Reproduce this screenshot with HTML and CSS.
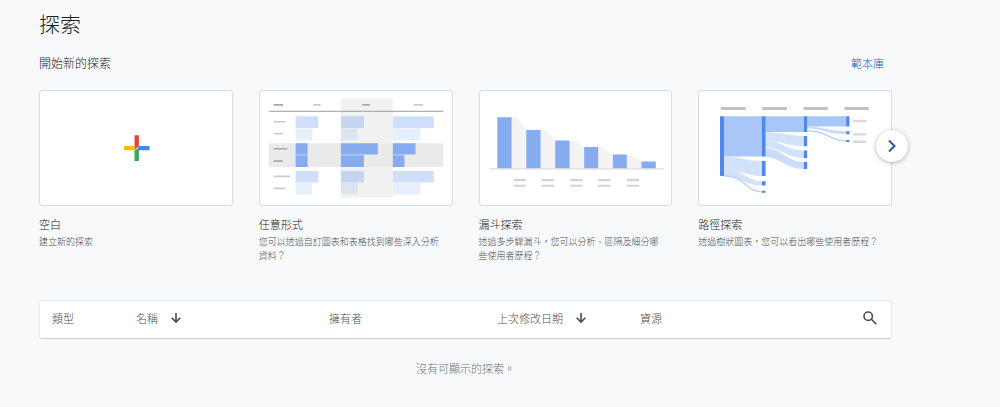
FILE: index.html
```html
<!DOCTYPE html>
<html lang="zh-Hant">
<head>
    <meta charset="utf-8">
    <title>探索</title>
    <link rel="stylesheet" href="styles.css">
</head>
<body>
    <main class="page">
        <h1 class="page-title">探索</h1>

        <section>
            <div class="section-head">
                <h2>開始新的探索</h2>
                <a class="gallery-link" href="#">範本庫</a>
            </div>

            <div class="templates">
                <a class="template" href="#">
                    <span class="preview">
                        <svg viewBox="27 18 576 342" aria-hidden="true">
                            <path fill="#ea4335" d="M311 151h13v32l-13 13z" />
                            <path fill="#fbbc04" d="M279 183h32v13h-32z" />
                            <path fill="#34a853" d="M311 196l13-6v38h-13z" />
                            <path fill="#4285f4" d="M324 183h32v13h-38z" />
                        </svg>
                    </span>
                    <span class="template-name">空白</span>
                    <span class="template-text">建立新的探索</span>
                </a>

                <a class="template" href="#">
                    <span class="preview">
                        <svg viewBox="27 18 576 342" aria-hidden="true">
                            <path fill="#f1f1f1" d="M270 41h156v298H270z" />
                            <path fill="#ebeaea" d="M54 175h524v71H54z" />
                            <path fill="#b0b0b0" d="M54 77h524v4H54z" />
                            <path fill="#a8a8a8" d="M68 57h28v5H68zM334 57h23v5h-23zM68 189h41v5H68zM68 226h27v5H68z" />
                            <path fill="#cbcbcb" d="M187 57h22v5h-22zM490 57h27v5h-27zM68 108h36v5H68zM68 144h28v5H68zM68 272h50v5H68zM68 308h35v5H68z" />
                            <path fill="#cfdffb" d="M134 94h68v35h-68zM426 94h123v35H426zM134 258h68v35h-68zM426 258h123v35H426z" />
                            <path fill="#c5d4ef" d="M270 94h69v35h-69zM270 258h69v35h-69z" />
                            <path fill="#e6effd" d="M134 131h50v35h-50zM426 131h82v35h-82zM134 294h49v35h-49zM426 294h82v35h-82z" />
                            <path fill="#dce4f0" d="M270 131h50v35h-50zM270 294h50v35h-50z" />
                            <path fill="#86abef" d="M134 175h36v34h-36zM134 211h36v35h-36zM270 175h111v34H270zM270 211h69v35h-69zM426 175h68v34h-68zM426 211h35v35h-35z" />
                            <path fill="#a5c1f4" d="M134 209h36v2h-36zM270 209h69v2h-69zM426 209h35v2h-35z" />
                        </svg>
                    </span>
                    <span class="template-name">任意形式</span>
                    <span class="template-text">您可以透過自訂圖表和表格找到哪些深入分析資料？</span>
                </a>

                <a class="template" href="#">
                    <span class="preview">
                        <svg viewBox="27 18 576 342" aria-hidden="true">
                            <path fill="#f3f3f3" d="M122 97h14l30 38v116h-44zM209 135h14l30 32v84h-44zM296 167h14l30 19v65h-44zM382 186h14l30 23v42h-44zM468 209h14l30 21v21h-44z" />
                            <path fill="#86abef" d="M79 97h43v154H79zM166 135h43v116h-43zM253 167h43v84h-43zM340 186h42v65h-42zM426 209h42v42h-42zM512 230h43v21h-43z" />
                            <path fill="#dcdcdc" d="M56 250h523v4H56z" />
                            <path fill="#d3d3d3" d="M128 282h37v7h-37zM212 282h37v7h-37zM298 282h37v7h-37zM382 282h37v7h-37zM468 282h37v7h-37zM128 300h37v6h-37zM212 300h37v6h-37zM298 300h37v6h-37zM382 300h37v6h-37zM468 300h37v6h-37z" />
                        </svg>
                    </span>
                    <span class="template-name">漏斗探索</span>
                    <span class="template-text">透過多步驟漏斗，您可以分析、區隔及細分哪些使用者歷程？</span>
                </a>

                <div class="template-last">
                    <a class="template" href="#">
                        <span class="preview">
                            <svg viewBox="27 18 576 342" aria-hidden="true">
                                <path fill="#c1c1c1" d="M93 66h74v9H93zM217 66h74v9h-74zM341 66h73v9h-73zM464 66h73v9h-73z" />
                                <path fill="#d9d9d9" d="M489 105h41v7h-41zM489 145h41v7h-41zM489 167h41v7h-41z" />
                                <path fill="#a9c6f8" d="M102 94h114v121H102zM227 94h115v47H227zM352 94h117v31H352z" />
                                <path fill="#d2e2fb" d="M102 215c45 0 65 13 114 13v45c-34 0-50-10-79-15 30 12 50 31 79 31v13c-48 0-66-27-114-29z" />
                                <path fill="#d2e2fb" d="M227 141c45 0 65 12 115 12v31c-48 0-70-15-115-18z" />
                                <path fill="#d2e2fb" d="M227 167c45 0 65 30 115 30v22c-50 0-70-30-115-33z" />
                                <path fill="#c9dcfb" d="M227 189c45 0 65 42 115 42v21c-50 0-70-33-115-36z" />
                                <path fill="#c9dcfb" d="M352 125c45 0 68 14 117 14v9c-50 0-70-15-117-19z" />
                                <path fill="none" stroke="#b9d1fa" stroke-width="4" d="M352 138c64 0 66 30 117 30" />
                                <path fill="none" stroke="#b9d1fa" stroke-width="4" d="M102 273c64 0 66 48 114 48" />
                                <path fill="#4f87ec" d="M90 94h12v179H90zM216 94h11v121h-11zM216 228h11v45h-11zM216 289h11v13h-11zM216 318h11v6h-11zM342 94h10v47h-10zM342 153h10v31h-10zM342 197h10v22h-10zM342 231h10v21h-10zM469 94h10v31h-10zM469 139h10v9h-10zM469 165h10v6h-10z" />
                            </svg>
                        </span>
                        <span class="template-name">路徑探索</span>
                        <span class="template-text">透過樹狀圖表，您可以看出哪些使用者歷程？</span>
                    </a>
                    <button class="next" type="button" aria-label="下一頁">
                        <svg width="16" height="16" viewBox="0 0 16 16" aria-hidden="true">
                            <path fill="none" stroke="#2f559f" stroke-width="2" d="M5 2.500l5.500 5.500L5 13.500" />
                        </svg>
                    </button>
                </div>
            </div>
        </section>

        <table class="list">
            <thead>
                <tr>
                    <th class="col-type">類型</th>
                    <th class="col-name">
                        <button class="sort" type="button">名稱
                            <svg width="10" height="10" viewBox="0 0 10 10" aria-hidden="true">
                                <path d="M5 0v9M.700 4.800L5 9.100l4.300-4.300" />
                            </svg>
                        </button>
                    </th>
                    <th class="col-owner">擁有者</th>
                    <th class="col-date">
                        <button class="sort" type="button">上次修改日期
                            <svg width="10" height="10" viewBox="0 0 10 10" aria-hidden="true">
                                <path d="M5 0v9M.700 4.800L5 9.100l4.300-4.300" />
                            </svg>
                        </button>
                    </th>
                    <th>
                        <div class="last-head">
                            資源
                            <button class="search" type="button" aria-label="搜尋">
                                <svg width="14" height="14" viewBox="0 0 14 14" aria-hidden="true">
                                    <circle cx="5.200" cy="5.200" r="4.200" />
                                    <path d="M8.300 8.300l5 5" />
                                </svg>
                            </button>
                        </div>
                    </th>
                </tr>
            </thead>
        </table>
        <p class="empty">沒有可顯示的探索。</p>
    </main>
</body>
</html>
```
FILE: styles.css
```css
body {
    margin: 0;
    background-color: #f8f9fb;
    color: #202124;
    font-family: "Noto Sans CJK TC", sans-serif;
    font-weight: 300;
}
h1, h2, p { margin: 0; font-weight: 300; }
a { text-decoration: none; }
svg { display: block; }
button {
    padding: 0;
    border: 0;
    background: none;
    color: inherit;
    font: inherit;
    cursor: pointer;
}

.page { padding: 9px 108px 30px 39px; }
.page-title { font-size: 21px; line-height: 28px; }

.section-head {
    display: flex;
    align-items: center;
    justify-content: space-between;
    margin: 16px 0 17px;
    padding-right: 8px;
    line-height: 20px;
}
.section-head h2 { font-size: 12px; }
.gallery-link { color: #1a5dcc; font-size: 11px; }

.templates {
    display: grid;
    grid-template-columns: repeat(4, 1fr);
    gap: 26px;
}
.template { display: block; color: #202124; }
.template-last { position: relative; }
.preview {
    display: block;
    overflow: hidden;
    border: 1px solid #dadce0;
    border-radius: 3px;
    background-color: #fff;
}
.preview svg { width: 100%; }
.template-name {
    display: block;
    margin-top: 10px;
    font-size: 11px;
    line-height: 16px;
}
.template-text {
    display: block;
    margin-top: 3px;
    padding-right: 8px;
    color: #4a4d51;
    font-size: 9px;
    line-height: 14px;
}
/* sits over the edge of the last preview */
.next {
    position: absolute;
    top: 40px;
    right: -16px;
    display: flex;
    align-items: center;
    justify-content: center;
    width: 32px;
    height: 32px;
    border-radius: 50%;
    background-color: #fff;
    box-shadow: 0 1px 4px rgba(60, 64, 67, .4);
}

.list {
    width: 100%;
    margin-top: 37px;
    table-layout: fixed;
    border: 1px solid #e8eaed;
    border-bottom-color: #c8ccd0;
    border-radius: 3px;
    border-spacing: 0;
    background-color: #fff;
    color: #4a4d51;
    font-size: 11px;
}
.list th {
    height: 34px;
    padding: 0 12px 3px;
    font-weight: 300;
    text-align: left;
}
.list .col-type { width: 60px; }
.list .col-name { width: 169px; }
.list .col-owner { width: 144px; }
.list .col-date { width: 119px; }
.sort { display: flex; align-items: center; gap: 13px; }
.sort svg, .search svg { fill: none; stroke: #4a4d51; stroke-width: 1.6; }
.last-head { display: flex; align-items: center; justify-content: space-between; }
.search { padding: 2px; }

.empty {
    margin-top: 22px;
    color: #6b7075;
    font-size: 11px;
    line-height: 14px;
    text-align: center;
}
```
